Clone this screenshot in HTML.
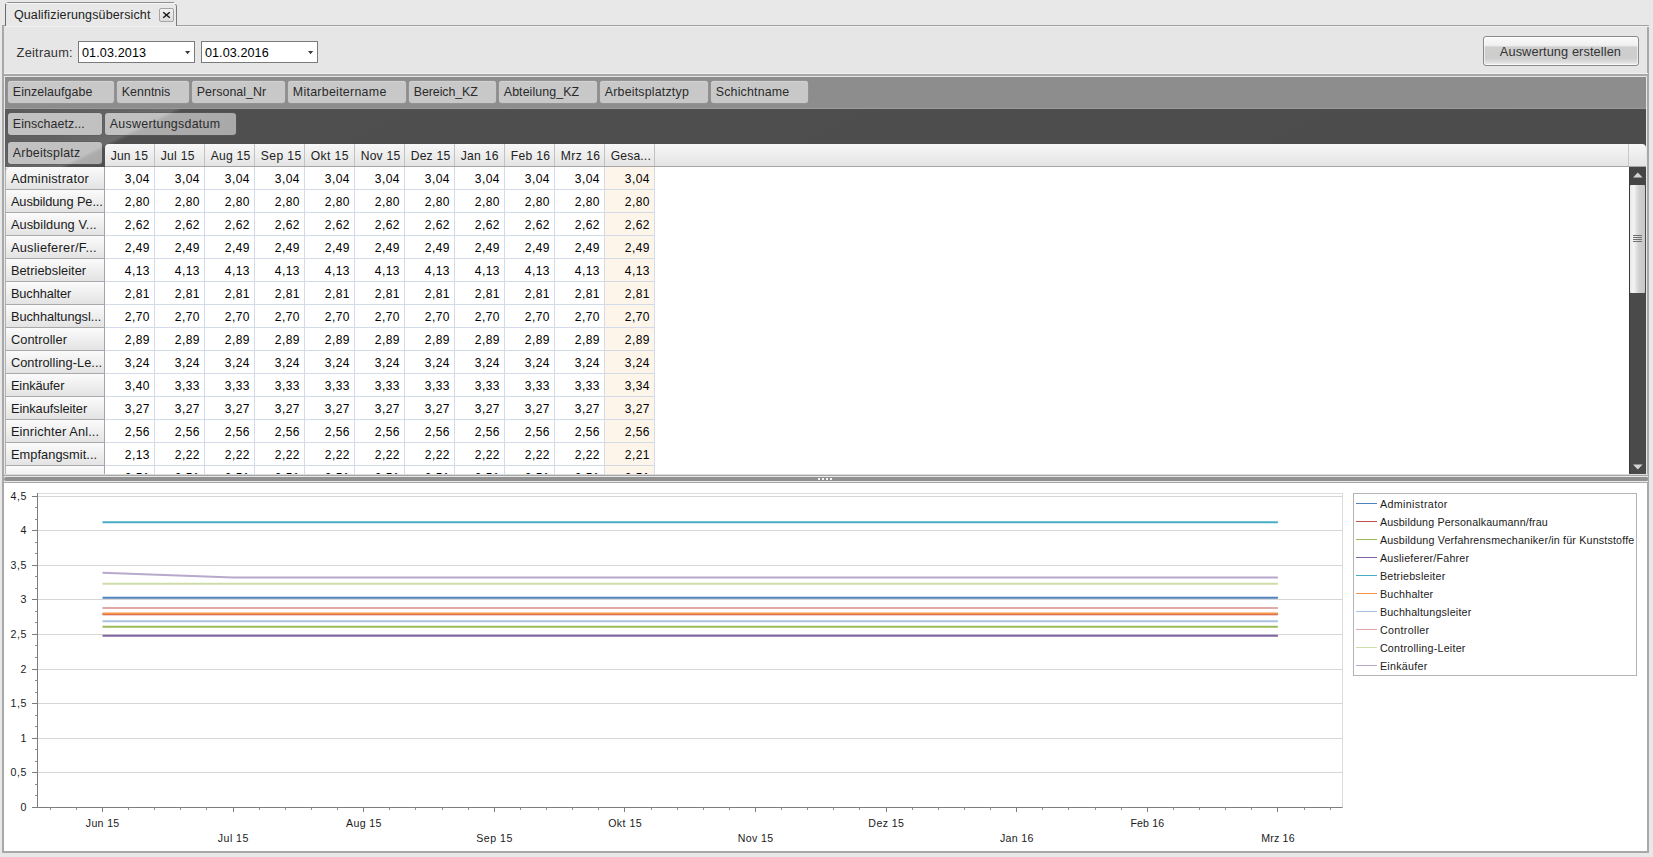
<!DOCTYPE html><html><head><meta charset="utf-8"><style>
html,body{margin:0;padding:0;}
body{width:1653px;height:857px;overflow:hidden;position:relative;background:#e8e8e8;font-family:"Liberation Sans", sans-serif;}
.b{position:absolute;box-sizing:border-box;}
.t{position:absolute;white-space:pre;line-height:1;font-family:"Liberation Sans", sans-serif;}

</style></head><body>
<div class="b" style="left:2px;top:25px;width:1647px;height:828px;border:2px solid #a8a8a8;border-top:1px solid #a0a0a0;background:#e6e6e6;"></div>
<div class="b" style="left:4px;top:26px;width:1645px;height:1px;background:#f0f0f0;"></div>
<div class="b" style="left:5px;top:2px;width:172px;height:24px;border:1px solid #8e8e8e;border-bottom:none;border-radius:4px 5px 0 0;background:#e8e8e8;border-left-color:#6a6a6a;border-right-color:#7a7a7a;"></div>
<div class="b" style="left:6px;top:3px;width:170px;height:1px;background:#f6f6f6;"></div>
<div class="t" style="left:13.90px;top:8.72px;font-size:12.5px;color:#222;letter-spacing:0.135px;">Qualifizierungsübersicht</div>
<div class="b" style="left:159px;top:8px;width:15px;height:14px;border:1px solid #a4a4a4;border-radius:2px;background:linear-gradient(#f2f2f2,#dcdcdc);"></div>
<svg class="b" style="left:159px;top:8px" width="15" height="14"><path d="M4.2 4.2 L10.8 9.8 M10.8 4.2 L4.2 9.8" stroke="#1a1a1a" stroke-width="1.5"/></svg>
<div class="b" style="left:4px;top:73px;width:1644px;height:1px;background:#efefef;"></div>
<div class="b" style="left:4px;top:74px;width:1644px;height:1.5px;background:#a8a8a8;"></div>
<div class="t" style="left:16.60px;top:47.06px;font-size:12.8px;color:#333;letter-spacing:0.244px;">Zeitraum:</div>
<div class="b" style="left:78px;top:41px;width:117px;height:22px;border:1px solid #7a7a7a;background:#fff;"></div>
<div class="t" style="left:81.90px;top:46.93px;font-size:12.6px;color:#000;letter-spacing:0.130px;">01.03.2013</div>
<svg class="b" style="left:185px;top:51px" width="6" height="4"><path d="M0 0 L5.2 0 L2.6 3.2 Z" fill="#3a3a3a"/></svg>
<div class="b" style="left:201px;top:41px;width:117px;height:22px;border:1px solid #7a7a7a;background:#fff;"></div>
<div class="t" style="left:204.90px;top:46.93px;font-size:12.6px;color:#000;letter-spacing:0.085px;">01.03.2016</div>
<svg class="b" style="left:308px;top:51px" width="6" height="4"><path d="M0 0 L5.2 0 L2.6 3.2 Z" fill="#3a3a3a"/></svg>
<div class="b" style="left:1483px;top:36px;width:156px;height:30px;border:1px solid #8a8a8a;border-radius:3px;background:linear-gradient(#fafafa 0%,#f0f0f0 30%,#cfcfcf 36%,#cdcdcd 75%,#dedede 90%,#f4f4f4 100%);box-shadow:inset 0 0 0 1px rgba(255,255,255,0.6);"></div>
<div class="t" style="left:1499.80px;top:46.06px;font-size:12.8px;color:#333;letter-spacing:0.089px;">Auswertung erstellen</div>
<div class="b" style="left:5px;top:77px;width:1641px;height:397px;background:#fff;border-left:1px solid #a0a0a0;"></div>
<div class="b" style="left:5px;top:77px;width:1641px;height:31px;background:#8d8d8d;"></div>
<div class="b" style="left:5px;top:108px;width:1641px;height:1px;background:#9a9a9a;"></div>
<div class="b" style="left:5px;top:109px;width:1641px;height:58px;background:linear-gradient(153.4deg,#5a5a5a 0px,#606060 40px,#6a6a6a 76px,#4f4f4f 80px,#4c4c4c 100%);"></div>
<div class="b" style="left:8px;top:81px;width:106px;height:22px;background:#c8c8c8;border-radius:3px;box-shadow:inset 0 1px 0 #d2d2d2, 0 0 0 0.5px #9a9a9a;"></div>
<div class="t" style="left:12.80px;top:86.00px;font-size:12.4px;color:#2a2a2a;letter-spacing:0.088px;">Einzelaufgabe</div>
<div class="b" style="left:117px;top:81px;width:72px;height:22px;background:#c8c8c8;border-radius:3px;box-shadow:inset 0 1px 0 #d2d2d2, 0 0 0 0.5px #9a9a9a;"></div>
<div class="t" style="left:121.80px;top:86.00px;font-size:12.4px;color:#2a2a2a;letter-spacing:0.038px;">Kenntnis</div>
<div class="b" style="left:192px;top:81px;width:93px;height:22px;background:#c8c8c8;border-radius:3px;box-shadow:inset 0 1px 0 #d2d2d2, 0 0 0 0.5px #9a9a9a;"></div>
<div class="t" style="left:196.80px;top:86.00px;font-size:12.4px;color:#2a2a2a;letter-spacing:0.053px;">Personal_Nr</div>
<div class="b" style="left:288px;top:81px;width:118px;height:22px;background:#c8c8c8;border-radius:3px;box-shadow:inset 0 1px 0 #d2d2d2, 0 0 0 0.5px #9a9a9a;"></div>
<div class="t" style="left:292.80px;top:86.00px;font-size:12.4px;color:#2a2a2a;letter-spacing:0.283px;">Mitarbeitername</div>
<div class="b" style="left:409px;top:81px;width:87px;height:22px;background:#c8c8c8;border-radius:3px;box-shadow:inset 0 1px 0 #d2d2d2, 0 0 0 0.5px #9a9a9a;"></div>
<div class="t" style="left:413.80px;top:86.00px;font-size:12.4px;color:#2a2a2a;letter-spacing:-0.083px;">Bereich_KZ</div>
<div class="b" style="left:499px;top:81px;width:98px;height:22px;background:#c8c8c8;border-radius:3px;box-shadow:inset 0 1px 0 #d2d2d2, 0 0 0 0.5px #9a9a9a;"></div>
<div class="t" style="left:503.80px;top:86.00px;font-size:12.4px;color:#2a2a2a;letter-spacing:0.081px;">Abteilung_KZ</div>
<div class="b" style="left:600px;top:81px;width:108px;height:22px;background:#c8c8c8;border-radius:3px;box-shadow:inset 0 1px 0 #d2d2d2, 0 0 0 0.5px #9a9a9a;"></div>
<div class="t" style="left:604.80px;top:86.00px;font-size:12.4px;color:#2a2a2a;letter-spacing:0.195px;">Arbeitsplatztyp</div>
<div class="b" style="left:711px;top:81px;width:97px;height:22px;background:#c8c8c8;border-radius:3px;box-shadow:inset 0 1px 0 #d2d2d2, 0 0 0 0.5px #9a9a9a;"></div>
<div class="t" style="left:715.80px;top:86.00px;font-size:12.4px;color:#2a2a2a;letter-spacing:0.176px;">Schichtname</div>
<div class="b" style="left:8px;top:113px;width:94px;height:22px;background:linear-gradient(153.4deg,#c2c2c2 0px,#c0c0c0 71.1px,#acacac 75.1px,#a8a8a8 100%);border-radius:3px;box-shadow:0 0 0 0.5px #5a5a5a;"></div>
<div class="t" style="left:12.80px;top:118.00px;font-size:12.4px;color:#2a2a2a;letter-spacing:0.087px;">Einschaetz...</div>
<div class="b" style="left:105px;top:113px;width:131px;height:22px;background:linear-gradient(153.4deg,#c2c2c2 0px,#c0c0c0 27.7px,#acacac 31.7px,#a8a8a8 100%);border-radius:3px;box-shadow:0 0 0 0.5px #5a5a5a;"></div>
<div class="t" style="left:109.80px;top:118.00px;font-size:12.4px;color:#2a2a2a;letter-spacing:0.281px;">Auswertungsdatum</div>
<div class="b" style="left:8px;top:142px;width:94px;height:22px;background:linear-gradient(153.4deg,#c2c2c2 0px,#c0c0c0 45.2px,#acacac 49.2px,#a8a8a8 100%);border-radius:3px;box-shadow:0 0 0 0.5px #5a5a5a;"></div>
<div class="t" style="left:12.80px;top:147.00px;font-size:12.4px;color:#2a2a2a;letter-spacing:0.241px;">Arbeitsplatz</div>
<div class="b" style="left:105px;top:144px;width:1541px;height:23px;background:linear-gradient(#f7f7f7,#e4e4e4);border-bottom:1px solid #a6a6a6;border-radius:4px 4px 0 0;"></div>
<div class="t" style="left:110.70px;top:149.76px;font-size:12.1px;color:#222;letter-spacing:0.197px;">Jun 15</div>
<div class="b" style="left:154px;top:144px;width:1px;height:22px;background:#c2c2c2;"></div>
<div class="t" style="left:160.70px;top:149.76px;font-size:12.1px;color:#222;letter-spacing:0.324px;">Jul 15</div>
<div class="b" style="left:204px;top:144px;width:1px;height:22px;background:#c2c2c2;"></div>
<div class="t" style="left:210.70px;top:149.76px;font-size:12.1px;color:#222;letter-spacing:0.251px;">Aug 15</div>
<div class="b" style="left:254px;top:144px;width:1px;height:22px;background:#c2c2c2;"></div>
<div class="t" style="left:260.70px;top:149.76px;font-size:12.1px;color:#222;letter-spacing:0.451px;">Sep 15</div>
<div class="b" style="left:304px;top:144px;width:1px;height:22px;background:#c2c2c2;"></div>
<div class="t" style="left:310.70px;top:149.76px;font-size:12.1px;color:#222;letter-spacing:0.412px;">Okt 15</div>
<div class="b" style="left:354px;top:144px;width:1px;height:22px;background:#c2c2c2;"></div>
<div class="t" style="left:360.70px;top:149.76px;font-size:12.1px;color:#222;letter-spacing:0.234px;">Nov 15</div>
<div class="b" style="left:404px;top:144px;width:1px;height:22px;background:#c2c2c2;"></div>
<div class="t" style="left:410.70px;top:149.76px;font-size:12.1px;color:#222;letter-spacing:0.234px;">Dez 15</div>
<div class="b" style="left:454px;top:144px;width:1px;height:22px;background:#c2c2c2;"></div>
<div class="t" style="left:460.70px;top:149.76px;font-size:12.1px;color:#222;letter-spacing:0.278px;">Jan 16</div>
<div class="b" style="left:504px;top:144px;width:1px;height:22px;background:#c2c2c2;"></div>
<div class="t" style="left:510.70px;top:149.76px;font-size:12.1px;color:#222;letter-spacing:0.349px;">Feb 16</div>
<div class="b" style="left:554px;top:144px;width:1px;height:22px;background:#c2c2c2;"></div>
<div class="t" style="left:560.70px;top:149.76px;font-size:12.1px;color:#222;letter-spacing:0.486px;">Mrz 16</div>
<div class="b" style="left:604px;top:144px;width:1px;height:22px;background:#c2c2c2;"></div>
<div class="t" style="left:610.70px;top:149.76px;font-size:12.1px;color:#222;letter-spacing:0.183px;">Gesa...</div>
<div class="b" style="left:654px;top:144px;width:1px;height:22px;background:#c2c2c2;"></div>
<div class="b" style="left:1628px;top:144px;width:1px;height:22px;background:#c8c8c8;"></div>
<div class="b" style="left:605px;top:167px;width:49px;height:307px;background:#fdf5ea;"></div>
<div class="b" style="left:0px;top:0px;width:1629px;height:474px;overflow:hidden">
<div class="b" style="left:5px;top:167px;width:100px;height:23px;background:linear-gradient(#fbfbfb,#e3e3e3);border-bottom:1px solid #a9a9a9;border-right:1px solid #a4a4a4;border-left:1px solid #b4b4b4;border-radius:5px 0 0 0;"></div>
<div class="t" style="left:10.90px;top:172.96px;font-size:12.8px;color:#1a1a1a;letter-spacing:0.209px;">Administrator</div>
<div class="b" style="left:105px;top:189px;width:550px;height:1px;background:#d3dae8;"></div>
<div class="t" style="left:124.80px;top:173.24px;font-size:12px;color:#000;letter-spacing:0.447px;">3,04</div>
<div class="t" style="left:174.80px;top:173.24px;font-size:12px;color:#000;letter-spacing:0.447px;">3,04</div>
<div class="t" style="left:224.80px;top:173.24px;font-size:12px;color:#000;letter-spacing:0.447px;">3,04</div>
<div class="t" style="left:274.80px;top:173.24px;font-size:12px;color:#000;letter-spacing:0.447px;">3,04</div>
<div class="t" style="left:324.80px;top:173.24px;font-size:12px;color:#000;letter-spacing:0.447px;">3,04</div>
<div class="t" style="left:374.80px;top:173.24px;font-size:12px;color:#000;letter-spacing:0.447px;">3,04</div>
<div class="t" style="left:424.80px;top:173.24px;font-size:12px;color:#000;letter-spacing:0.447px;">3,04</div>
<div class="t" style="left:474.80px;top:173.24px;font-size:12px;color:#000;letter-spacing:0.447px;">3,04</div>
<div class="t" style="left:524.80px;top:173.24px;font-size:12px;color:#000;letter-spacing:0.447px;">3,04</div>
<div class="t" style="left:574.80px;top:173.24px;font-size:12px;color:#000;letter-spacing:0.447px;">3,04</div>
<div class="t" style="left:624.80px;top:173.24px;font-size:12px;color:#000;letter-spacing:0.447px;">3,04</div>
<div class="b" style="left:5px;top:190px;width:100px;height:23px;background:linear-gradient(#fbfbfb,#e3e3e3);border-bottom:1px solid #a9a9a9;border-right:1px solid #a4a4a4;border-left:1px solid #b4b4b4;"></div>
<div class="t" style="left:10.90px;top:195.96px;font-size:12.8px;color:#1a1a1a;letter-spacing:-0.080px;">Ausbildung Pe...</div>
<div class="b" style="left:105px;top:212px;width:550px;height:1px;background:#d3dae8;"></div>
<div class="t" style="left:124.80px;top:196.24px;font-size:12px;color:#000;letter-spacing:0.447px;">2,80</div>
<div class="t" style="left:174.80px;top:196.24px;font-size:12px;color:#000;letter-spacing:0.447px;">2,80</div>
<div class="t" style="left:224.80px;top:196.24px;font-size:12px;color:#000;letter-spacing:0.447px;">2,80</div>
<div class="t" style="left:274.80px;top:196.24px;font-size:12px;color:#000;letter-spacing:0.447px;">2,80</div>
<div class="t" style="left:324.80px;top:196.24px;font-size:12px;color:#000;letter-spacing:0.447px;">2,80</div>
<div class="t" style="left:374.80px;top:196.24px;font-size:12px;color:#000;letter-spacing:0.447px;">2,80</div>
<div class="t" style="left:424.80px;top:196.24px;font-size:12px;color:#000;letter-spacing:0.447px;">2,80</div>
<div class="t" style="left:474.80px;top:196.24px;font-size:12px;color:#000;letter-spacing:0.447px;">2,80</div>
<div class="t" style="left:524.80px;top:196.24px;font-size:12px;color:#000;letter-spacing:0.447px;">2,80</div>
<div class="t" style="left:574.80px;top:196.24px;font-size:12px;color:#000;letter-spacing:0.447px;">2,80</div>
<div class="t" style="left:624.80px;top:196.24px;font-size:12px;color:#000;letter-spacing:0.447px;">2,80</div>
<div class="b" style="left:5px;top:213px;width:100px;height:23px;background:linear-gradient(#fbfbfb,#e3e3e3);border-bottom:1px solid #a9a9a9;border-right:1px solid #a4a4a4;border-left:1px solid #b4b4b4;"></div>
<div class="t" style="left:10.90px;top:218.96px;font-size:12.8px;color:#1a1a1a;letter-spacing:0.057px;">Ausbildung V...</div>
<div class="b" style="left:105px;top:235px;width:550px;height:1px;background:#d3dae8;"></div>
<div class="t" style="left:124.80px;top:219.24px;font-size:12px;color:#000;letter-spacing:0.447px;">2,62</div>
<div class="t" style="left:174.80px;top:219.24px;font-size:12px;color:#000;letter-spacing:0.447px;">2,62</div>
<div class="t" style="left:224.80px;top:219.24px;font-size:12px;color:#000;letter-spacing:0.447px;">2,62</div>
<div class="t" style="left:274.80px;top:219.24px;font-size:12px;color:#000;letter-spacing:0.447px;">2,62</div>
<div class="t" style="left:324.80px;top:219.24px;font-size:12px;color:#000;letter-spacing:0.447px;">2,62</div>
<div class="t" style="left:374.80px;top:219.24px;font-size:12px;color:#000;letter-spacing:0.447px;">2,62</div>
<div class="t" style="left:424.80px;top:219.24px;font-size:12px;color:#000;letter-spacing:0.447px;">2,62</div>
<div class="t" style="left:474.80px;top:219.24px;font-size:12px;color:#000;letter-spacing:0.447px;">2,62</div>
<div class="t" style="left:524.80px;top:219.24px;font-size:12px;color:#000;letter-spacing:0.447px;">2,62</div>
<div class="t" style="left:574.80px;top:219.24px;font-size:12px;color:#000;letter-spacing:0.447px;">2,62</div>
<div class="t" style="left:624.80px;top:219.24px;font-size:12px;color:#000;letter-spacing:0.447px;">2,62</div>
<div class="b" style="left:5px;top:236px;width:100px;height:23px;background:linear-gradient(#fbfbfb,#e3e3e3);border-bottom:1px solid #a9a9a9;border-right:1px solid #a4a4a4;border-left:1px solid #b4b4b4;"></div>
<div class="t" style="left:10.90px;top:241.96px;font-size:12.8px;color:#1a1a1a;letter-spacing:0.260px;">Auslieferer/F...</div>
<div class="b" style="left:105px;top:258px;width:550px;height:1px;background:#d3dae8;"></div>
<div class="t" style="left:124.80px;top:242.24px;font-size:12px;color:#000;letter-spacing:0.447px;">2,49</div>
<div class="t" style="left:174.80px;top:242.24px;font-size:12px;color:#000;letter-spacing:0.447px;">2,49</div>
<div class="t" style="left:224.80px;top:242.24px;font-size:12px;color:#000;letter-spacing:0.447px;">2,49</div>
<div class="t" style="left:274.80px;top:242.24px;font-size:12px;color:#000;letter-spacing:0.447px;">2,49</div>
<div class="t" style="left:324.80px;top:242.24px;font-size:12px;color:#000;letter-spacing:0.447px;">2,49</div>
<div class="t" style="left:374.80px;top:242.24px;font-size:12px;color:#000;letter-spacing:0.447px;">2,49</div>
<div class="t" style="left:424.80px;top:242.24px;font-size:12px;color:#000;letter-spacing:0.447px;">2,49</div>
<div class="t" style="left:474.80px;top:242.24px;font-size:12px;color:#000;letter-spacing:0.447px;">2,49</div>
<div class="t" style="left:524.80px;top:242.24px;font-size:12px;color:#000;letter-spacing:0.447px;">2,49</div>
<div class="t" style="left:574.80px;top:242.24px;font-size:12px;color:#000;letter-spacing:0.447px;">2,49</div>
<div class="t" style="left:624.80px;top:242.24px;font-size:12px;color:#000;letter-spacing:0.447px;">2,49</div>
<div class="b" style="left:5px;top:259px;width:100px;height:23px;background:linear-gradient(#fbfbfb,#e3e3e3);border-bottom:1px solid #a9a9a9;border-right:1px solid #a4a4a4;border-left:1px solid #b4b4b4;"></div>
<div class="t" style="left:10.90px;top:264.96px;font-size:12.8px;color:#1a1a1a;letter-spacing:0.039px;">Betriebsleiter</div>
<div class="b" style="left:105px;top:281px;width:550px;height:1px;background:#d3dae8;"></div>
<div class="t" style="left:124.80px;top:265.24px;font-size:12px;color:#000;letter-spacing:0.447px;">4,13</div>
<div class="t" style="left:174.80px;top:265.24px;font-size:12px;color:#000;letter-spacing:0.447px;">4,13</div>
<div class="t" style="left:224.80px;top:265.24px;font-size:12px;color:#000;letter-spacing:0.447px;">4,13</div>
<div class="t" style="left:274.80px;top:265.24px;font-size:12px;color:#000;letter-spacing:0.447px;">4,13</div>
<div class="t" style="left:324.80px;top:265.24px;font-size:12px;color:#000;letter-spacing:0.447px;">4,13</div>
<div class="t" style="left:374.80px;top:265.24px;font-size:12px;color:#000;letter-spacing:0.447px;">4,13</div>
<div class="t" style="left:424.80px;top:265.24px;font-size:12px;color:#000;letter-spacing:0.447px;">4,13</div>
<div class="t" style="left:474.80px;top:265.24px;font-size:12px;color:#000;letter-spacing:0.447px;">4,13</div>
<div class="t" style="left:524.80px;top:265.24px;font-size:12px;color:#000;letter-spacing:0.447px;">4,13</div>
<div class="t" style="left:574.80px;top:265.24px;font-size:12px;color:#000;letter-spacing:0.447px;">4,13</div>
<div class="t" style="left:624.80px;top:265.24px;font-size:12px;color:#000;letter-spacing:0.447px;">4,13</div>
<div class="b" style="left:5px;top:282px;width:100px;height:23px;background:linear-gradient(#fbfbfb,#e3e3e3);border-bottom:1px solid #a9a9a9;border-right:1px solid #a4a4a4;border-left:1px solid #b4b4b4;"></div>
<div class="t" style="left:10.90px;top:287.96px;font-size:12.8px;color:#1a1a1a;letter-spacing:-0.088px;">Buchhalter</div>
<div class="b" style="left:105px;top:304px;width:550px;height:1px;background:#d3dae8;"></div>
<div class="t" style="left:124.80px;top:288.24px;font-size:12px;color:#000;letter-spacing:0.447px;">2,81</div>
<div class="t" style="left:174.80px;top:288.24px;font-size:12px;color:#000;letter-spacing:0.447px;">2,81</div>
<div class="t" style="left:224.80px;top:288.24px;font-size:12px;color:#000;letter-spacing:0.447px;">2,81</div>
<div class="t" style="left:274.80px;top:288.24px;font-size:12px;color:#000;letter-spacing:0.447px;">2,81</div>
<div class="t" style="left:324.80px;top:288.24px;font-size:12px;color:#000;letter-spacing:0.447px;">2,81</div>
<div class="t" style="left:374.80px;top:288.24px;font-size:12px;color:#000;letter-spacing:0.447px;">2,81</div>
<div class="t" style="left:424.80px;top:288.24px;font-size:12px;color:#000;letter-spacing:0.447px;">2,81</div>
<div class="t" style="left:474.80px;top:288.24px;font-size:12px;color:#000;letter-spacing:0.447px;">2,81</div>
<div class="t" style="left:524.80px;top:288.24px;font-size:12px;color:#000;letter-spacing:0.447px;">2,81</div>
<div class="t" style="left:574.80px;top:288.24px;font-size:12px;color:#000;letter-spacing:0.447px;">2,81</div>
<div class="t" style="left:624.80px;top:288.24px;font-size:12px;color:#000;letter-spacing:0.447px;">2,81</div>
<div class="b" style="left:5px;top:305px;width:100px;height:23px;background:linear-gradient(#fbfbfb,#e3e3e3);border-bottom:1px solid #a9a9a9;border-right:1px solid #a4a4a4;border-left:1px solid #b4b4b4;"></div>
<div class="t" style="left:10.90px;top:310.96px;font-size:12.8px;color:#1a1a1a;letter-spacing:-0.044px;">Buchhaltungsl...</div>
<div class="b" style="left:105px;top:327px;width:550px;height:1px;background:#d3dae8;"></div>
<div class="t" style="left:124.80px;top:311.24px;font-size:12px;color:#000;letter-spacing:0.447px;">2,70</div>
<div class="t" style="left:174.80px;top:311.24px;font-size:12px;color:#000;letter-spacing:0.447px;">2,70</div>
<div class="t" style="left:224.80px;top:311.24px;font-size:12px;color:#000;letter-spacing:0.447px;">2,70</div>
<div class="t" style="left:274.80px;top:311.24px;font-size:12px;color:#000;letter-spacing:0.447px;">2,70</div>
<div class="t" style="left:324.80px;top:311.24px;font-size:12px;color:#000;letter-spacing:0.447px;">2,70</div>
<div class="t" style="left:374.80px;top:311.24px;font-size:12px;color:#000;letter-spacing:0.447px;">2,70</div>
<div class="t" style="left:424.80px;top:311.24px;font-size:12px;color:#000;letter-spacing:0.447px;">2,70</div>
<div class="t" style="left:474.80px;top:311.24px;font-size:12px;color:#000;letter-spacing:0.447px;">2,70</div>
<div class="t" style="left:524.80px;top:311.24px;font-size:12px;color:#000;letter-spacing:0.447px;">2,70</div>
<div class="t" style="left:574.80px;top:311.24px;font-size:12px;color:#000;letter-spacing:0.447px;">2,70</div>
<div class="t" style="left:624.80px;top:311.24px;font-size:12px;color:#000;letter-spacing:0.447px;">2,70</div>
<div class="b" style="left:5px;top:328px;width:100px;height:23px;background:linear-gradient(#fbfbfb,#e3e3e3);border-bottom:1px solid #a9a9a9;border-right:1px solid #a4a4a4;border-left:1px solid #b4b4b4;"></div>
<div class="t" style="left:10.90px;top:333.96px;font-size:12.8px;color:#1a1a1a;letter-spacing:0.068px;">Controller</div>
<div class="b" style="left:105px;top:350px;width:550px;height:1px;background:#d3dae8;"></div>
<div class="t" style="left:124.80px;top:334.24px;font-size:12px;color:#000;letter-spacing:0.447px;">2,89</div>
<div class="t" style="left:174.80px;top:334.24px;font-size:12px;color:#000;letter-spacing:0.447px;">2,89</div>
<div class="t" style="left:224.80px;top:334.24px;font-size:12px;color:#000;letter-spacing:0.447px;">2,89</div>
<div class="t" style="left:274.80px;top:334.24px;font-size:12px;color:#000;letter-spacing:0.447px;">2,89</div>
<div class="t" style="left:324.80px;top:334.24px;font-size:12px;color:#000;letter-spacing:0.447px;">2,89</div>
<div class="t" style="left:374.80px;top:334.24px;font-size:12px;color:#000;letter-spacing:0.447px;">2,89</div>
<div class="t" style="left:424.80px;top:334.24px;font-size:12px;color:#000;letter-spacing:0.447px;">2,89</div>
<div class="t" style="left:474.80px;top:334.24px;font-size:12px;color:#000;letter-spacing:0.447px;">2,89</div>
<div class="t" style="left:524.80px;top:334.24px;font-size:12px;color:#000;letter-spacing:0.447px;">2,89</div>
<div class="t" style="left:574.80px;top:334.24px;font-size:12px;color:#000;letter-spacing:0.447px;">2,89</div>
<div class="t" style="left:624.80px;top:334.24px;font-size:12px;color:#000;letter-spacing:0.447px;">2,89</div>
<div class="b" style="left:5px;top:351px;width:100px;height:23px;background:linear-gradient(#fbfbfb,#e3e3e3);border-bottom:1px solid #a9a9a9;border-right:1px solid #a4a4a4;border-left:1px solid #b4b4b4;"></div>
<div class="t" style="left:10.90px;top:356.96px;font-size:12.8px;color:#1a1a1a;letter-spacing:0.054px;">Controlling-Le...</div>
<div class="b" style="left:105px;top:373px;width:550px;height:1px;background:#d3dae8;"></div>
<div class="t" style="left:124.80px;top:357.24px;font-size:12px;color:#000;letter-spacing:0.447px;">3,24</div>
<div class="t" style="left:174.80px;top:357.24px;font-size:12px;color:#000;letter-spacing:0.447px;">3,24</div>
<div class="t" style="left:224.80px;top:357.24px;font-size:12px;color:#000;letter-spacing:0.447px;">3,24</div>
<div class="t" style="left:274.80px;top:357.24px;font-size:12px;color:#000;letter-spacing:0.447px;">3,24</div>
<div class="t" style="left:324.80px;top:357.24px;font-size:12px;color:#000;letter-spacing:0.447px;">3,24</div>
<div class="t" style="left:374.80px;top:357.24px;font-size:12px;color:#000;letter-spacing:0.447px;">3,24</div>
<div class="t" style="left:424.80px;top:357.24px;font-size:12px;color:#000;letter-spacing:0.447px;">3,24</div>
<div class="t" style="left:474.80px;top:357.24px;font-size:12px;color:#000;letter-spacing:0.447px;">3,24</div>
<div class="t" style="left:524.80px;top:357.24px;font-size:12px;color:#000;letter-spacing:0.447px;">3,24</div>
<div class="t" style="left:574.80px;top:357.24px;font-size:12px;color:#000;letter-spacing:0.447px;">3,24</div>
<div class="t" style="left:624.80px;top:357.24px;font-size:12px;color:#000;letter-spacing:0.447px;">3,24</div>
<div class="b" style="left:5px;top:374px;width:100px;height:23px;background:linear-gradient(#fbfbfb,#e3e3e3);border-bottom:1px solid #a9a9a9;border-right:1px solid #a4a4a4;border-left:1px solid #b4b4b4;"></div>
<div class="t" style="left:10.90px;top:379.96px;font-size:12.8px;color:#1a1a1a;letter-spacing:-0.070px;">Einkäufer</div>
<div class="b" style="left:105px;top:396px;width:550px;height:1px;background:#d3dae8;"></div>
<div class="t" style="left:124.80px;top:380.24px;font-size:12px;color:#000;letter-spacing:0.447px;">3,40</div>
<div class="t" style="left:174.80px;top:380.24px;font-size:12px;color:#000;letter-spacing:0.447px;">3,33</div>
<div class="t" style="left:224.80px;top:380.24px;font-size:12px;color:#000;letter-spacing:0.447px;">3,33</div>
<div class="t" style="left:274.80px;top:380.24px;font-size:12px;color:#000;letter-spacing:0.447px;">3,33</div>
<div class="t" style="left:324.80px;top:380.24px;font-size:12px;color:#000;letter-spacing:0.447px;">3,33</div>
<div class="t" style="left:374.80px;top:380.24px;font-size:12px;color:#000;letter-spacing:0.447px;">3,33</div>
<div class="t" style="left:424.80px;top:380.24px;font-size:12px;color:#000;letter-spacing:0.447px;">3,33</div>
<div class="t" style="left:474.80px;top:380.24px;font-size:12px;color:#000;letter-spacing:0.447px;">3,33</div>
<div class="t" style="left:524.80px;top:380.24px;font-size:12px;color:#000;letter-spacing:0.447px;">3,33</div>
<div class="t" style="left:574.80px;top:380.24px;font-size:12px;color:#000;letter-spacing:0.447px;">3,33</div>
<div class="t" style="left:624.80px;top:380.24px;font-size:12px;color:#000;letter-spacing:0.447px;">3,34</div>
<div class="b" style="left:5px;top:397px;width:100px;height:23px;background:linear-gradient(#fbfbfb,#e3e3e3);border-bottom:1px solid #a9a9a9;border-right:1px solid #a4a4a4;border-left:1px solid #b4b4b4;"></div>
<div class="t" style="left:10.90px;top:402.96px;font-size:12.8px;color:#1a1a1a;letter-spacing:-0.041px;">Einkaufsleiter</div>
<div class="b" style="left:105px;top:419px;width:550px;height:1px;background:#d3dae8;"></div>
<div class="t" style="left:124.80px;top:403.24px;font-size:12px;color:#000;letter-spacing:0.447px;">3,27</div>
<div class="t" style="left:174.80px;top:403.24px;font-size:12px;color:#000;letter-spacing:0.447px;">3,27</div>
<div class="t" style="left:224.80px;top:403.24px;font-size:12px;color:#000;letter-spacing:0.447px;">3,27</div>
<div class="t" style="left:274.80px;top:403.24px;font-size:12px;color:#000;letter-spacing:0.447px;">3,27</div>
<div class="t" style="left:324.80px;top:403.24px;font-size:12px;color:#000;letter-spacing:0.447px;">3,27</div>
<div class="t" style="left:374.80px;top:403.24px;font-size:12px;color:#000;letter-spacing:0.447px;">3,27</div>
<div class="t" style="left:424.80px;top:403.24px;font-size:12px;color:#000;letter-spacing:0.447px;">3,27</div>
<div class="t" style="left:474.80px;top:403.24px;font-size:12px;color:#000;letter-spacing:0.447px;">3,27</div>
<div class="t" style="left:524.80px;top:403.24px;font-size:12px;color:#000;letter-spacing:0.447px;">3,27</div>
<div class="t" style="left:574.80px;top:403.24px;font-size:12px;color:#000;letter-spacing:0.447px;">3,27</div>
<div class="t" style="left:624.80px;top:403.24px;font-size:12px;color:#000;letter-spacing:0.447px;">3,27</div>
<div class="b" style="left:5px;top:420px;width:100px;height:23px;background:linear-gradient(#fbfbfb,#e3e3e3);border-bottom:1px solid #a9a9a9;border-right:1px solid #a4a4a4;border-left:1px solid #b4b4b4;"></div>
<div class="t" style="left:10.90px;top:425.96px;font-size:12.8px;color:#1a1a1a;letter-spacing:0.134px;">Einrichter Anl...</div>
<div class="b" style="left:105px;top:442px;width:550px;height:1px;background:#d3dae8;"></div>
<div class="t" style="left:124.80px;top:426.24px;font-size:12px;color:#000;letter-spacing:0.447px;">2,56</div>
<div class="t" style="left:174.80px;top:426.24px;font-size:12px;color:#000;letter-spacing:0.447px;">2,56</div>
<div class="t" style="left:224.80px;top:426.24px;font-size:12px;color:#000;letter-spacing:0.447px;">2,56</div>
<div class="t" style="left:274.80px;top:426.24px;font-size:12px;color:#000;letter-spacing:0.447px;">2,56</div>
<div class="t" style="left:324.80px;top:426.24px;font-size:12px;color:#000;letter-spacing:0.447px;">2,56</div>
<div class="t" style="left:374.80px;top:426.24px;font-size:12px;color:#000;letter-spacing:0.447px;">2,56</div>
<div class="t" style="left:424.80px;top:426.24px;font-size:12px;color:#000;letter-spacing:0.447px;">2,56</div>
<div class="t" style="left:474.80px;top:426.24px;font-size:12px;color:#000;letter-spacing:0.447px;">2,56</div>
<div class="t" style="left:524.80px;top:426.24px;font-size:12px;color:#000;letter-spacing:0.447px;">2,56</div>
<div class="t" style="left:574.80px;top:426.24px;font-size:12px;color:#000;letter-spacing:0.447px;">2,56</div>
<div class="t" style="left:624.80px;top:426.24px;font-size:12px;color:#000;letter-spacing:0.447px;">2,56</div>
<div class="b" style="left:5px;top:443px;width:100px;height:23px;background:linear-gradient(#fbfbfb,#e3e3e3);border-bottom:1px solid #a9a9a9;border-right:1px solid #a4a4a4;border-left:1px solid #b4b4b4;"></div>
<div class="t" style="left:10.90px;top:448.96px;font-size:12.8px;color:#1a1a1a;letter-spacing:0.066px;">Empfangsmit...</div>
<div class="b" style="left:105px;top:465px;width:550px;height:1px;background:#d3dae8;"></div>
<div class="t" style="left:124.80px;top:449.24px;font-size:12px;color:#000;letter-spacing:0.447px;">2,13</div>
<div class="t" style="left:174.80px;top:449.24px;font-size:12px;color:#000;letter-spacing:0.447px;">2,22</div>
<div class="t" style="left:224.80px;top:449.24px;font-size:12px;color:#000;letter-spacing:0.447px;">2,22</div>
<div class="t" style="left:274.80px;top:449.24px;font-size:12px;color:#000;letter-spacing:0.447px;">2,22</div>
<div class="t" style="left:324.80px;top:449.24px;font-size:12px;color:#000;letter-spacing:0.447px;">2,22</div>
<div class="t" style="left:374.80px;top:449.24px;font-size:12px;color:#000;letter-spacing:0.447px;">2,22</div>
<div class="t" style="left:424.80px;top:449.24px;font-size:12px;color:#000;letter-spacing:0.447px;">2,22</div>
<div class="t" style="left:474.80px;top:449.24px;font-size:12px;color:#000;letter-spacing:0.447px;">2,22</div>
<div class="t" style="left:524.80px;top:449.24px;font-size:12px;color:#000;letter-spacing:0.447px;">2,22</div>
<div class="t" style="left:574.80px;top:449.24px;font-size:12px;color:#000;letter-spacing:0.447px;">2,22</div>
<div class="t" style="left:624.80px;top:449.24px;font-size:12px;color:#000;letter-spacing:0.447px;">2,21</div>
<div class="b" style="left:5px;top:466px;width:100px;height:23px;background:linear-gradient(#fbfbfb,#e3e3e3);border-bottom:1px solid #a9a9a9;border-right:1px solid #a4a4a4;border-left:1px solid #b4b4b4;"></div>
<div class="b" style="left:105px;top:488px;width:550px;height:1px;background:#d3dae8;"></div>
<div class="t" style="left:124.80px;top:472.24px;font-size:12px;color:#000;letter-spacing:0.447px;">2,51</div>
<div class="t" style="left:174.80px;top:472.24px;font-size:12px;color:#000;letter-spacing:0.447px;">2,51</div>
<div class="t" style="left:224.80px;top:472.24px;font-size:12px;color:#000;letter-spacing:0.447px;">2,51</div>
<div class="t" style="left:274.80px;top:472.24px;font-size:12px;color:#000;letter-spacing:0.447px;">2,51</div>
<div class="t" style="left:324.80px;top:472.24px;font-size:12px;color:#000;letter-spacing:0.447px;">2,51</div>
<div class="t" style="left:374.80px;top:472.24px;font-size:12px;color:#000;letter-spacing:0.447px;">2,51</div>
<div class="t" style="left:424.80px;top:472.24px;font-size:12px;color:#000;letter-spacing:0.447px;">2,51</div>
<div class="t" style="left:474.80px;top:472.24px;font-size:12px;color:#000;letter-spacing:0.447px;">2,51</div>
<div class="t" style="left:524.80px;top:472.24px;font-size:12px;color:#000;letter-spacing:0.447px;">2,51</div>
<div class="t" style="left:574.80px;top:472.24px;font-size:12px;color:#000;letter-spacing:0.447px;">2,51</div>
<div class="t" style="left:624.80px;top:472.24px;font-size:12px;color:#000;letter-spacing:0.447px;">2,51</div>
<div class="b" style="left:154px;top:167px;width:1px;height:307px;background:#d3dae8;"></div>
<div class="b" style="left:204px;top:167px;width:1px;height:307px;background:#d3dae8;"></div>
<div class="b" style="left:254px;top:167px;width:1px;height:307px;background:#d3dae8;"></div>
<div class="b" style="left:304px;top:167px;width:1px;height:307px;background:#d3dae8;"></div>
<div class="b" style="left:354px;top:167px;width:1px;height:307px;background:#d3dae8;"></div>
<div class="b" style="left:404px;top:167px;width:1px;height:307px;background:#d3dae8;"></div>
<div class="b" style="left:454px;top:167px;width:1px;height:307px;background:#d3dae8;"></div>
<div class="b" style="left:504px;top:167px;width:1px;height:307px;background:#d3dae8;"></div>
<div class="b" style="left:554px;top:167px;width:1px;height:307px;background:#d3dae8;"></div>
<div class="b" style="left:604px;top:167px;width:1px;height:307px;background:#d3dae8;"></div>
<div class="b" style="left:654px;top:167px;width:1px;height:307px;background:#d3dae8;"></div>
</div>
<div class="b" style="left:1629px;top:167px;width:17px;height:307px;background:#4a4a4a;border-left:1px solid #3a3a3a;"></div>
<div class="b" style="left:1629px;top:167px;width:17px;height:18px;background:#454545;border-left:1px solid #3a3a3a;"></div>
<svg class="b" style="left:1633px;top:172px" width="10" height="6"><path d="M0 5.5 L4.8 0.5 L9.6 5.5 Z" fill="#d4d4d4"/></svg>
<div class="b" style="left:1630px;top:185px;width:15px;height:108px;background:linear-gradient(90deg,#e8e8e8 0%,#f4f4f4 25%,#d0d0d0 60%,#c8c8c8 100%);border-radius:1px;"></div>
<div class="b" style="left:1633px;top:235px;width:9px;height:1px;background:#707070;"></div>
<div class="b" style="left:1633px;top:237px;width:9px;height:1px;background:#707070;"></div>
<div class="b" style="left:1633px;top:239px;width:9px;height:1px;background:#707070;"></div>
<div class="b" style="left:1633px;top:241px;width:9px;height:1px;background:#707070;"></div>
<svg class="b" style="left:1633px;top:464px" width="10" height="6"><path d="M0 0.5 L9.6 0.5 L4.8 5.5 Z" fill="#d4d4d4"/></svg>
<div class="b" style="left:4px;top:474px;width:1644px;height:1px;background:#dcdcdc;"></div>
<div class="b" style="left:4px;top:475px;width:1644px;height:1px;background:#a4a4a4;"></div>
<div class="b" style="left:4px;top:476px;width:1644px;height:1px;background:#e8e8e8;"></div>
<div class="b" style="left:4px;top:477px;width:1644px;height:4px;background:#919191;border-radius:2px;"></div>
<div class="b" style="left:4px;top:481px;width:1644px;height:1px;background:#e8e8e8;"></div>
<div class="b" style="left:4px;top:482px;width:1644px;height:1px;background:#a8a8a8;"></div>
<div class="b" style="left:818px;top:478px;width:2px;height:2px;background:#f4f4f4;"></div>
<div class="b" style="left:822px;top:478px;width:2px;height:2px;background:#f4f4f4;"></div>
<div class="b" style="left:826px;top:478px;width:2px;height:2px;background:#f4f4f4;"></div>
<div class="b" style="left:830px;top:478px;width:2px;height:2px;background:#f4f4f4;"></div>
<div class="b" style="left:4px;top:483px;width:1643px;height:368px;background:#fff;"></div>
<div class="t" style="left:20.39px;top:802.33px;font-size:10.6px;color:#1a1a1a;letter-spacing:0.000px;">0</div>
<div class="t" style="left:10.60px;top:767.33px;font-size:10.6px;color:#1a1a1a;letter-spacing:0.483px;">0,5</div>
<div class="t" style="left:20.39px;top:733.33px;font-size:10.6px;color:#1a1a1a;letter-spacing:0.000px;">1</div>
<div class="t" style="left:10.60px;top:698.33px;font-size:10.6px;color:#1a1a1a;letter-spacing:0.483px;">1,5</div>
<div class="t" style="left:20.39px;top:664.33px;font-size:10.6px;color:#1a1a1a;letter-spacing:0.000px;">2</div>
<div class="t" style="left:10.60px;top:629.33px;font-size:10.6px;color:#1a1a1a;letter-spacing:0.483px;">2,5</div>
<div class="t" style="left:20.39px;top:594.33px;font-size:10.6px;color:#1a1a1a;letter-spacing:0.000px;">3</div>
<div class="t" style="left:10.60px;top:560.33px;font-size:10.6px;color:#1a1a1a;letter-spacing:0.483px;">3,5</div>
<div class="t" style="left:20.39px;top:525.33px;font-size:10.6px;color:#1a1a1a;letter-spacing:0.000px;">4</div>
<div class="t" style="left:10.60px;top:491.33px;font-size:10.6px;color:#1a1a1a;letter-spacing:0.483px;">4,5</div>
<div class="t" style="left:85.75px;top:818.03px;font-size:10.6px;color:#1a1a1a;letter-spacing:0.338px;">Jun 15</div>
<div class="t" style="left:217.85px;top:833.03px;font-size:10.6px;color:#1a1a1a;letter-spacing:0.444px;">Jul 15</div>
<div class="t" style="left:345.95px;top:818.03px;font-size:10.6px;color:#1a1a1a;letter-spacing:0.384px;">Aug 15</div>
<div class="t" style="left:476.30px;top:833.03px;font-size:10.6px;color:#1a1a1a;letter-spacing:0.484px;">Sep 15</div>
<div class="t" style="left:608.15px;top:818.03px;font-size:10.6px;color:#1a1a1a;letter-spacing:0.456px;">Okt 15</div>
<div class="t" style="left:737.75px;top:833.03px;font-size:10.6px;color:#1a1a1a;letter-spacing:0.384px;">Nov 15</div>
<div class="t" style="left:868.35px;top:818.03px;font-size:10.6px;color:#1a1a1a;letter-spacing:0.384px;">Dez 15</div>
<div class="t" style="left:999.95px;top:833.03px;font-size:10.6px;color:#1a1a1a;letter-spacing:0.338px;">Jan 16</div>
<div class="t" style="left:1130.40px;top:818.03px;font-size:10.6px;color:#1a1a1a;letter-spacing:0.163px;">Feb 16</div>
<div class="t" style="left:1261.20px;top:833.03px;font-size:10.6px;color:#1a1a1a;letter-spacing:0.202px;">Mrz 16</div>
<svg class="b" style="left:0;top:0" width="1653" height="857" viewBox="0 0 1653 857"><rect x="37.5" y="493.5" width="1305.0" height="314.0" fill="none" stroke="#dcdcdc" stroke-width="1"/><line x1="37.5" y1="772.5" x2="1342.5" y2="772.5" stroke="#d6d6d6" stroke-width="1"/><line x1="37.5" y1="738.5" x2="1342.5" y2="738.5" stroke="#d6d6d6" stroke-width="1"/><line x1="37.5" y1="703.5" x2="1342.5" y2="703.5" stroke="#d6d6d6" stroke-width="1"/><line x1="37.5" y1="669.5" x2="1342.5" y2="669.5" stroke="#d6d6d6" stroke-width="1"/><line x1="37.5" y1="634.5" x2="1342.5" y2="634.5" stroke="#d6d6d6" stroke-width="1"/><line x1="37.5" y1="599.5" x2="1342.5" y2="599.5" stroke="#d6d6d6" stroke-width="1"/><line x1="37.5" y1="565.5" x2="1342.5" y2="565.5" stroke="#d6d6d6" stroke-width="1"/><line x1="37.5" y1="530.5" x2="1342.5" y2="530.5" stroke="#d6d6d6" stroke-width="1"/><line x1="37.5" y1="496.5" x2="1342.5" y2="496.5" stroke="#d6d6d6" stroke-width="1"/><line x1="37.5" y1="493" x2="37.5" y2="808" stroke="#7c7c7c" stroke-width="1"/><line x1="37.5" y1="807.5" x2="1342.5" y2="807.5" stroke="#7c7c7c" stroke-width="1"/><line x1="32" y1="807.5" x2="37.5" y2="807.5" stroke="#7c7c7c" stroke-width="1"/><line x1="35" y1="795.5" x2="37.5" y2="795.5" stroke="#8c8c8c" stroke-width="1"/><line x1="35" y1="784.5" x2="37.5" y2="784.5" stroke="#8c8c8c" stroke-width="1"/><line x1="32" y1="772.5" x2="37.5" y2="772.5" stroke="#7c7c7c" stroke-width="1"/><line x1="35" y1="761.5" x2="37.5" y2="761.5" stroke="#8c8c8c" stroke-width="1"/><line x1="35" y1="749.5" x2="37.5" y2="749.5" stroke="#8c8c8c" stroke-width="1"/><line x1="32" y1="738.5" x2="37.5" y2="738.5" stroke="#7c7c7c" stroke-width="1"/><line x1="35" y1="726.5" x2="37.5" y2="726.5" stroke="#8c8c8c" stroke-width="1"/><line x1="35" y1="715.5" x2="37.5" y2="715.5" stroke="#8c8c8c" stroke-width="1"/><line x1="32" y1="703.5" x2="37.5" y2="703.5" stroke="#7c7c7c" stroke-width="1"/><line x1="35" y1="692.5" x2="37.5" y2="692.5" stroke="#8c8c8c" stroke-width="1"/><line x1="35" y1="680.5" x2="37.5" y2="680.5" stroke="#8c8c8c" stroke-width="1"/><line x1="32" y1="669.5" x2="37.5" y2="669.5" stroke="#7c7c7c" stroke-width="1"/><line x1="35" y1="657.5" x2="37.5" y2="657.5" stroke="#8c8c8c" stroke-width="1"/><line x1="35" y1="645.5" x2="37.5" y2="645.5" stroke="#8c8c8c" stroke-width="1"/><line x1="32" y1="634.5" x2="37.5" y2="634.5" stroke="#7c7c7c" stroke-width="1"/><line x1="35" y1="622.5" x2="37.5" y2="622.5" stroke="#8c8c8c" stroke-width="1"/><line x1="35" y1="611.5" x2="37.5" y2="611.5" stroke="#8c8c8c" stroke-width="1"/><line x1="32" y1="599.5" x2="37.5" y2="599.5" stroke="#7c7c7c" stroke-width="1"/><line x1="35" y1="588.5" x2="37.5" y2="588.5" stroke="#8c8c8c" stroke-width="1"/><line x1="35" y1="576.5" x2="37.5" y2="576.5" stroke="#8c8c8c" stroke-width="1"/><line x1="32" y1="565.5" x2="37.5" y2="565.5" stroke="#7c7c7c" stroke-width="1"/><line x1="35" y1="553.5" x2="37.5" y2="553.5" stroke="#8c8c8c" stroke-width="1"/><line x1="35" y1="542.5" x2="37.5" y2="542.5" stroke="#8c8c8c" stroke-width="1"/><line x1="32" y1="530.5" x2="37.5" y2="530.5" stroke="#7c7c7c" stroke-width="1"/><line x1="35" y1="519.5" x2="37.5" y2="519.5" stroke="#8c8c8c" stroke-width="1"/><line x1="35" y1="507.5" x2="37.5" y2="507.5" stroke="#8c8c8c" stroke-width="1"/><line x1="32" y1="496.5" x2="37.5" y2="496.5" stroke="#7c7c7c" stroke-width="1"/><line x1="50.5" y1="807.5" x2="50.5" y2="810" stroke="#8c8c8c" stroke-width="1"/><line x1="76.5" y1="807.5" x2="76.5" y2="810" stroke="#8c8c8c" stroke-width="1"/><line x1="102.5" y1="807.5" x2="102.5" y2="812" stroke="#7c7c7c" stroke-width="1"/><line x1="128.5" y1="807.5" x2="128.5" y2="810" stroke="#8c8c8c" stroke-width="1"/><line x1="154.5" y1="807.5" x2="154.5" y2="810" stroke="#8c8c8c" stroke-width="1"/><line x1="180.5" y1="807.5" x2="180.5" y2="810" stroke="#8c8c8c" stroke-width="1"/><line x1="206.5" y1="807.5" x2="206.5" y2="810" stroke="#8c8c8c" stroke-width="1"/><line x1="233.5" y1="807.5" x2="233.5" y2="812" stroke="#7c7c7c" stroke-width="1"/><line x1="259.5" y1="807.5" x2="259.5" y2="810" stroke="#8c8c8c" stroke-width="1"/><line x1="285.5" y1="807.5" x2="285.5" y2="810" stroke="#8c8c8c" stroke-width="1"/><line x1="311.5" y1="807.5" x2="311.5" y2="810" stroke="#8c8c8c" stroke-width="1"/><line x1="337.5" y1="807.5" x2="337.5" y2="810" stroke="#8c8c8c" stroke-width="1"/><line x1="363.5" y1="807.5" x2="363.5" y2="812" stroke="#7c7c7c" stroke-width="1"/><line x1="389.5" y1="807.5" x2="389.5" y2="810" stroke="#8c8c8c" stroke-width="1"/><line x1="415.5" y1="807.5" x2="415.5" y2="810" stroke="#8c8c8c" stroke-width="1"/><line x1="442.5" y1="807.5" x2="442.5" y2="810" stroke="#8c8c8c" stroke-width="1"/><line x1="468.5" y1="807.5" x2="468.5" y2="810" stroke="#8c8c8c" stroke-width="1"/><line x1="494.5" y1="807.5" x2="494.5" y2="812" stroke="#7c7c7c" stroke-width="1"/><line x1="520.5" y1="807.5" x2="520.5" y2="810" stroke="#8c8c8c" stroke-width="1"/><line x1="546.5" y1="807.5" x2="546.5" y2="810" stroke="#8c8c8c" stroke-width="1"/><line x1="572.5" y1="807.5" x2="572.5" y2="810" stroke="#8c8c8c" stroke-width="1"/><line x1="598.5" y1="807.5" x2="598.5" y2="810" stroke="#8c8c8c" stroke-width="1"/><line x1="624.5" y1="807.5" x2="624.5" y2="812" stroke="#7c7c7c" stroke-width="1"/><line x1="651.5" y1="807.5" x2="651.5" y2="810" stroke="#8c8c8c" stroke-width="1"/><line x1="677.5" y1="807.5" x2="677.5" y2="810" stroke="#8c8c8c" stroke-width="1"/><line x1="703.5" y1="807.5" x2="703.5" y2="810" stroke="#8c8c8c" stroke-width="1"/><line x1="729.5" y1="807.5" x2="729.5" y2="810" stroke="#8c8c8c" stroke-width="1"/><line x1="755.5" y1="807.5" x2="755.5" y2="812" stroke="#7c7c7c" stroke-width="1"/><line x1="781.5" y1="807.5" x2="781.5" y2="810" stroke="#8c8c8c" stroke-width="1"/><line x1="807.5" y1="807.5" x2="807.5" y2="810" stroke="#8c8c8c" stroke-width="1"/><line x1="833.5" y1="807.5" x2="833.5" y2="810" stroke="#8c8c8c" stroke-width="1"/><line x1="859.5" y1="807.5" x2="859.5" y2="810" stroke="#8c8c8c" stroke-width="1"/><line x1="886.5" y1="807.5" x2="886.5" y2="812" stroke="#7c7c7c" stroke-width="1"/><line x1="912.5" y1="807.5" x2="912.5" y2="810" stroke="#8c8c8c" stroke-width="1"/><line x1="938.5" y1="807.5" x2="938.5" y2="810" stroke="#8c8c8c" stroke-width="1"/><line x1="964.5" y1="807.5" x2="964.5" y2="810" stroke="#8c8c8c" stroke-width="1"/><line x1="990.5" y1="807.5" x2="990.5" y2="810" stroke="#8c8c8c" stroke-width="1"/><line x1="1016.5" y1="807.5" x2="1016.5" y2="812" stroke="#7c7c7c" stroke-width="1"/><line x1="1042.5" y1="807.5" x2="1042.5" y2="810" stroke="#8c8c8c" stroke-width="1"/><line x1="1068.5" y1="807.5" x2="1068.5" y2="810" stroke="#8c8c8c" stroke-width="1"/><line x1="1095.5" y1="807.5" x2="1095.5" y2="810" stroke="#8c8c8c" stroke-width="1"/><line x1="1121.5" y1="807.5" x2="1121.5" y2="810" stroke="#8c8c8c" stroke-width="1"/><line x1="1147.5" y1="807.5" x2="1147.5" y2="812" stroke="#7c7c7c" stroke-width="1"/><line x1="1173.5" y1="807.5" x2="1173.5" y2="810" stroke="#8c8c8c" stroke-width="1"/><line x1="1199.5" y1="807.5" x2="1199.5" y2="810" stroke="#8c8c8c" stroke-width="1"/><line x1="1225.5" y1="807.5" x2="1225.5" y2="810" stroke="#8c8c8c" stroke-width="1"/><line x1="1251.5" y1="807.5" x2="1251.5" y2="810" stroke="#8c8c8c" stroke-width="1"/><line x1="1277.5" y1="807.5" x2="1277.5" y2="812" stroke="#7c7c7c" stroke-width="1"/><line x1="1304.5" y1="807.5" x2="1304.5" y2="810" stroke="#8c8c8c" stroke-width="1"/><line x1="1330.5" y1="807.5" x2="1330.5" y2="810" stroke="#8c8c8c" stroke-width="1"/><polyline points="102.5,597.67 233.1,597.67 363.7,597.67 494.3,597.67 624.9,597.67 755.5,597.67 886.1,597.67 1016.7,597.67 1147.3,597.67 1277.9,597.67" fill="none" stroke="#4F81BD" stroke-width="2"/><polyline points="102.5,614.28 233.1,614.28 363.7,614.28 494.3,614.28 624.9,614.28 755.5,614.28 886.1,614.28 1016.7,614.28 1147.3,614.28 1277.9,614.28" fill="none" stroke="#C0504D" stroke-width="2"/><polyline points="102.5,626.74 233.1,626.74 363.7,626.74 494.3,626.74 624.9,626.74 755.5,626.74 886.1,626.74 1016.7,626.74 1147.3,626.74 1277.9,626.74" fill="none" stroke="#9BBB59" stroke-width="2"/><polyline points="102.5,635.74 233.1,635.74 363.7,635.74 494.3,635.74 624.9,635.74 755.5,635.74 886.1,635.74 1016.7,635.74 1147.3,635.74 1277.9,635.74" fill="none" stroke="#8064A2" stroke-width="2"/><polyline points="102.5,522.22 233.1,522.22 363.7,522.22 494.3,522.22 624.9,522.22 755.5,522.22 886.1,522.22 1016.7,522.22 1147.3,522.22 1277.9,522.22" fill="none" stroke="#4BACC6" stroke-width="2"/><polyline points="102.5,613.59 233.1,613.59 363.7,613.59 494.3,613.59 624.9,613.59 755.5,613.59 886.1,613.59 1016.7,613.59 1147.3,613.59 1277.9,613.59" fill="none" stroke="#F79646" stroke-width="2"/><polyline points="102.5,621.21 233.1,621.21 363.7,621.21 494.3,621.21 624.9,621.21 755.5,621.21 886.1,621.21 1016.7,621.21 1147.3,621.21 1277.9,621.21" fill="none" stroke="#A9C2E0" stroke-width="2"/><polyline points="102.5,608.05 233.1,608.05 363.7,608.05 494.3,608.05 624.9,608.05 755.5,608.05 886.1,608.05 1016.7,608.05 1147.3,608.05 1277.9,608.05" fill="none" stroke="#E0A8A6" stroke-width="2"/><polyline points="102.5,583.83 233.1,583.83 363.7,583.83 494.3,583.83 624.9,583.83 755.5,583.83 886.1,583.83 1016.7,583.83 1147.3,583.83 1277.9,583.83" fill="none" stroke="#CCDDAA" stroke-width="2"/><polyline points="102.5,572.75 233.1,577.60 363.7,577.60 494.3,577.60 624.9,577.60 755.5,577.60 886.1,577.60 1016.7,577.60 1147.3,577.60 1277.9,577.60" fill="none" stroke="#B8A8CC" stroke-width="2"/><rect x="1353.5" y="493.5" width="283" height="182" fill="#fff" stroke="#b4b4b4" stroke-width="1"/><line x1="1356" y1="503.5" x2="1377" y2="503.5" stroke="#4F81BD" stroke-width="1"/><line x1="1356" y1="521.5" x2="1377" y2="521.5" stroke="#C0504D" stroke-width="1"/><line x1="1356" y1="539.5" x2="1377" y2="539.5" stroke="#9BBB59" stroke-width="1"/><line x1="1356" y1="557.5" x2="1377" y2="557.5" stroke="#8064A2" stroke-width="1"/><line x1="1356" y1="575.5" x2="1377" y2="575.5" stroke="#4BACC6" stroke-width="1"/><line x1="1356" y1="593.5" x2="1377" y2="593.5" stroke="#F79646" stroke-width="1"/><line x1="1356" y1="611.5" x2="1377" y2="611.5" stroke="#A9C2E0" stroke-width="1"/><line x1="1356" y1="629.5" x2="1377" y2="629.5" stroke="#E0A8A6" stroke-width="1"/><line x1="1356" y1="647.5" x2="1377" y2="647.5" stroke="#CCDDAA" stroke-width="1"/><line x1="1356" y1="665.5" x2="1377" y2="665.5" stroke="#B8A8CC" stroke-width="1"/></svg>
<div class="t" style="left:1379.90px;top:498.64px;font-size:10.7px;color:#1a1a1a;letter-spacing:0.378px;">Administrator</div>
<div class="t" style="left:1379.90px;top:516.64px;font-size:10.7px;color:#1a1a1a;letter-spacing:0.150px;">Ausbildung Personalkaumann/frau</div>
<div class="t" style="left:1379.90px;top:534.64px;font-size:10.7px;color:#1a1a1a;letter-spacing:0.176px;">Ausbildung Verfahrensmechaniker/in für Kunststoffe</div>
<div class="t" style="left:1379.90px;top:552.64px;font-size:10.7px;color:#1a1a1a;letter-spacing:0.215px;">Auslieferer/Fahrer</div>
<div class="t" style="left:1379.90px;top:570.64px;font-size:10.7px;color:#1a1a1a;letter-spacing:0.225px;">Betriebsleiter</div>
<div class="t" style="left:1379.90px;top:588.64px;font-size:10.7px;color:#1a1a1a;letter-spacing:0.243px;">Buchhalter</div>
<div class="t" style="left:1379.90px;top:606.64px;font-size:10.7px;color:#1a1a1a;letter-spacing:0.204px;">Buchhaltungsleiter</div>
<div class="t" style="left:1379.90px;top:624.64px;font-size:10.7px;color:#1a1a1a;letter-spacing:0.328px;">Controller</div>
<div class="t" style="left:1379.90px;top:642.64px;font-size:10.7px;color:#1a1a1a;letter-spacing:0.242px;">Controlling-Leiter</div>
<div class="t" style="left:1379.90px;top:660.64px;font-size:10.7px;color:#1a1a1a;letter-spacing:0.293px;">Einkäufer</div>
</body></html>
